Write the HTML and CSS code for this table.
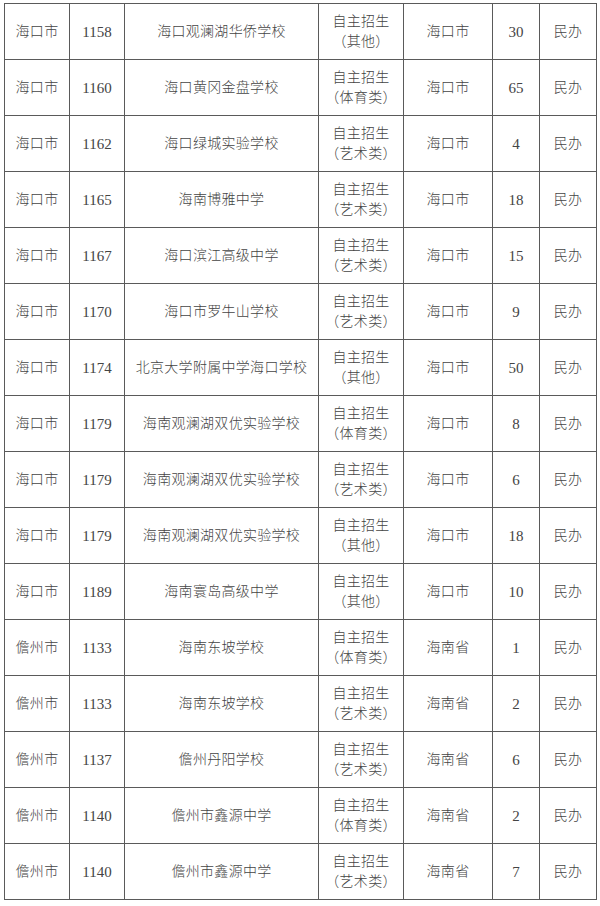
FILE: index.html
```html
<!DOCTYPE html>
<html lang="zh">
<head>
<meta charset="utf-8">
<link rel="stylesheet" href="styles.css">
</head>
<body>
<table class="grid">
<colgroup>
<col class="c1"><col class="c2"><col class="c3"><col class="c4"><col class="c5"><col class="c6"><col class="c7">
</colgroup>
<tbody>
<tr><td>海口市</td><td class="num">1158</td><td>海口观澜湖华侨学校</td><td>自主招生<br>（其他）</td><td>海口市</td><td class="num">30</td><td>民办</td></tr>
<tr><td>海口市</td><td class="num">1160</td><td>海口黄冈金盘学校</td><td>自主招生<br>（体育类）</td><td>海口市</td><td class="num">65</td><td>民办</td></tr>
<tr><td>海口市</td><td class="num">1162</td><td>海口绿城实验学校</td><td>自主招生<br>（艺术类）</td><td>海口市</td><td class="num">4</td><td>民办</td></tr>
<tr><td>海口市</td><td class="num">1165</td><td>海南博雅中学</td><td>自主招生<br>（艺术类）</td><td>海口市</td><td class="num">18</td><td>民办</td></tr>
<tr><td>海口市</td><td class="num">1167</td><td>海口滨江高级中学</td><td>自主招生<br>（艺术类）</td><td>海口市</td><td class="num">15</td><td>民办</td></tr>
<tr><td>海口市</td><td class="num">1170</td><td>海口市罗牛山学校</td><td>自主招生<br>（艺术类）</td><td>海口市</td><td class="num">9</td><td>民办</td></tr>
<tr><td>海口市</td><td class="num">1174</td><td>北京大学附属中学海口学校</td><td>自主招生<br>（其他）</td><td>海口市</td><td class="num">50</td><td>民办</td></tr>
<tr><td>海口市</td><td class="num">1179</td><td>海南观澜湖双优实验学校</td><td>自主招生<br>（体育类）</td><td>海口市</td><td class="num">8</td><td>民办</td></tr>
<tr><td>海口市</td><td class="num">1179</td><td>海南观澜湖双优实验学校</td><td>自主招生<br>（艺术类）</td><td>海口市</td><td class="num">6</td><td>民办</td></tr>
<tr><td>海口市</td><td class="num">1179</td><td>海南观澜湖双优实验学校</td><td>自主招生<br>（其他）</td><td>海口市</td><td class="num">18</td><td>民办</td></tr>
<tr><td>海口市</td><td class="num">1189</td><td>海南寰岛高级中学</td><td>自主招生<br>（其他）</td><td>海口市</td><td class="num">10</td><td>民办</td></tr>
<tr><td>儋州市</td><td class="num">1133</td><td>海南东坡学校</td><td>自主招生<br>（体育类）</td><td>海南省</td><td class="num">1</td><td>民办</td></tr>
<tr><td>儋州市</td><td class="num">1133</td><td>海南东坡学校</td><td>自主招生<br>（艺术类）</td><td>海南省</td><td class="num">2</td><td>民办</td></tr>
<tr><td>儋州市</td><td class="num">1137</td><td>儋州丹阳学校</td><td>自主招生<br>（艺术类）</td><td>海南省</td><td class="num">6</td><td>民办</td></tr>
<tr><td>儋州市</td><td class="num">1140</td><td>儋州市鑫源中学</td><td>自主招生<br>（体育类）</td><td>海南省</td><td class="num">2</td><td>民办</td></tr>
<tr><td>儋州市</td><td class="num">1140</td><td>儋州市鑫源中学</td><td>自主招生<br>（艺术类）</td><td>海南省</td><td class="num">7</td><td>民办</td></tr>
</tbody>
</table>
</body>
</html>
```
FILE: styles.css
```css
html, body {
  margin: 0;
  padding: 0;
  background: #ffffff;
}
body {
  padding: 3px 0 0 4px;
  font-family: "Liberation Serif", "Noto Sans CJK SC", serif;
  color: #444444;
}
.grid {
  border-collapse: collapse;
  table-layout: fixed;
  width: 592px;
}
.c1 { width: 65px; }
.c2 { width: 55px; }
.c3 { width: 194px; }
.c4 { width: 85px; }
.c5 { width: 89px; }
.c6 { width: 47px; }
.c7 { width: 57px; }
.grid td {
  border: 1px solid #5a5a5a;
  height: 55px;
  padding: 0;
  text-align: center;
  vertical-align: middle;
  font-size: 14px;
  font-weight: 300;
  line-height: 20px;
  letter-spacing: 0.3px;
  white-space: nowrap;
  text-spacing-trim: space-all;
}
.grid td.num {
  font-size: 15px;
  font-weight: 400;
  letter-spacing: 0;
}
```
